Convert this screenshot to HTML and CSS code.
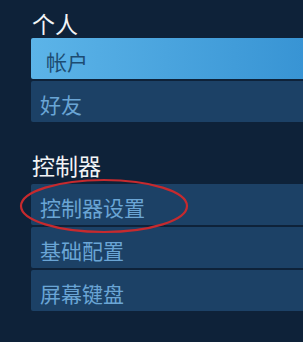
FILE: index.html
```html
<!DOCTYPE html>
<html lang="zh-CN">
<head>
  <meta charset="UTF-8">
  <meta name="viewport" content="width=device-width, initial-scale=1.0">
  <title>设置</title>
  <link rel="stylesheet" href="styles.css">
</head>
<body>
  <div class="menu">
    <h2 class="group-title first">个人</h2>
    <div class="item selected">帐户</div>
    <div class="item">好友</div>

    <h2 class="group-title">控制器</h2>
    <div class="item">控制器设置</div>
    <div class="item">基础配置</div>
    <div class="item">屏幕键盘</div>

    <h2 class="group-title last">界面</h2>

    <svg class="circle-mark" width="172" height="58" viewBox="0 0 172 58">
      <ellipse cx="86" cy="29" rx="83" ry="26" fill="none" stroke="#c62a2e" stroke-width="2.2" />
    </svg>
  </div>
</body>
</html>
```

FILE: styles.css
```css
* {
  margin: 0;
  padding: 0;
  box-sizing: border-box;
}

html, body {
  height: 100%;
}

body {
  background: #0e2239;
  overflow: hidden;
  font-family: 'Noto Sans CJK SC', 'Noto Sans', sans-serif;
}

.menu {
  position: relative;
  padding-left: 31px;
}

.group-title {
  font-size: 23px;
  font-weight: 400;
  line-height: 1;
  color: #f2f4f6;
  padding: 30px 0 6px 1px;
  height: 60px;
}

.group-title.first {
  padding-top: 12px;
  height: 38px;
}

.group-title.last {
  padding-top: 27px;
}

.item {
  height: 41px;
  margin-bottom: 2px;
  padding: 13px 0 0 9px;
  font-size: 21px;
  line-height: 1;
  color: #6aa5d5;
  background: #1c4166;
  border-radius: 2px 0 0 2px;
}

.item.selected {
  padding-left: 15px;
  color: #1d4c72;
  background: linear-gradient(90deg, #5cb4e8, #3894d4);
}

/* red hand-drawn circle over "控制器设置" */
.circle-mark {
  position: absolute;
  left: 18px;
  top: 177px;
}
```
